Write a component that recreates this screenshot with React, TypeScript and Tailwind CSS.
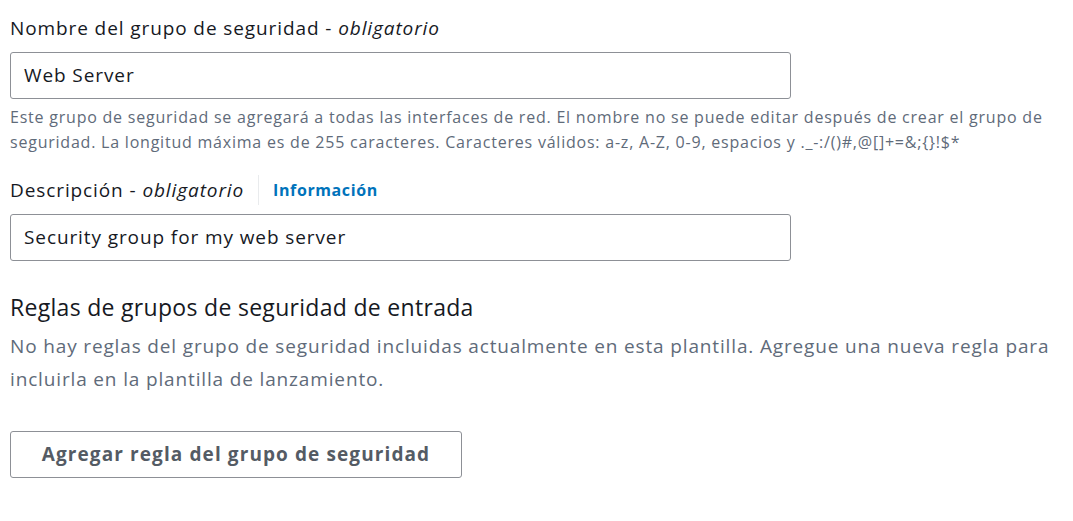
export default function App() {
  return (
    <main
      className="min-h-screen bg-white px-[10px] pt-[14px] text-[#16191f]"
      style={{ fontFamily: '"Open Sans", "Noto Sans", Arial, sans-serif' }}
    >
      <div>
        <label className="block text-[19px] leading-[28px] tracking-[0.9px]">
          Nombre del grupo de seguridad - <i>obligatorio</i>
        </label>
        <div className="mt-[10px] flex h-[47px] w-[781px] items-center rounded-[3px] border border-[#8d9096] px-[13px] text-[19px] tracking-[0.9px]">
          Web Server
        </div>
        <p className="mt-[6px] text-[16px] leading-[25px] tracking-[0.78px] text-[#5f6b7a]">
          Este grupo de seguridad se agregará a todas las interfaces de red. El nombre no se puede editar después de crear el grupo de
          <br />
          seguridad. La longitud máxima es de 255 caracteres. Caracteres válidos: a-z, A-Z, 0-9, espacios y ._-:/()#,@[]+=&amp;;{"{}"}!$*
        </p>
      </div>

      <div className="mt-[20px]">
        <div className="flex items-center text-[19px] leading-[28px] tracking-[0.9px]">
          <span>
            Descripción - <i>obligatorio</i>
          </span>
          <span className="mx-[14px] h-[30px] w-px bg-[#e9ebed]" />
          <span className="text-[16px] font-bold tracking-[0.6px] text-[#0073bb]">Información</span>
        </div>
        <div className="mt-[9px] flex h-[47px] w-[781px] items-center rounded-[3px] border border-[#8d9096] px-[13px] text-[19px] tracking-[0.9px]">
          Security group for my web server
        </div>
      </div>

      <h2 className="mt-[30px] text-[23px] leading-[32px] tracking-[0.3px]">
        Reglas de grupos de seguridad de entrada
      </h2>
      <p className="mt-[7px] text-[19px] leading-[33px] tracking-[0.85px] text-[#5f6b7a]">
        No hay reglas del grupo de seguridad incluidas actualmente en esta plantilla. Agregue una nueva regla para
        <br />
        incluirla en la plantilla de lanzamiento.
      </p>

      <button className="mt-[35px] h-[47px] w-[452px] rounded-[3px] border border-[#8d9096] text-[19px] font-bold tracking-[1.1px] text-[#545b64]">
        Agregar regla del grupo de seguridad
      </button>
    </main>
  );
}
